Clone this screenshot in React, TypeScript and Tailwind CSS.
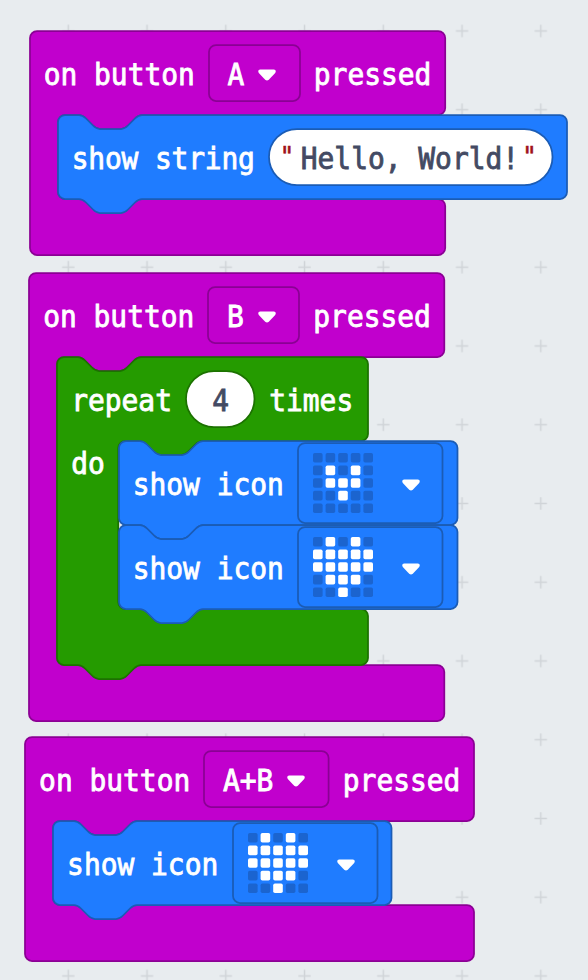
import type { ReactNode } from "react";

type Tone = "input" | "basic" | "loops";

const tones: Record<Tone, string> = {
  input: "fill-[#c100cd] stroke-[#8b0094]",
  basic: "fill-[#1f7cff] stroke-[#1b5cb5]",
  loops: "fill-[#259b00] stroke-[#1c7200]",
};

const R = 7;
const UNIT = 84;
const CORNER = `a${R},${R} 0 0 1`;
const NOTCH =
  "c3.5,0 5.25,1.75 7,3.5 l7,7 c1.75,1.75 3.5,3.5 7,3.5 h21 c3.5,0 5.25,-1.75 7,-3.5 l7,-7 c1.75,-1.75 3.5,-3.5 7,-3.5";
const NOTCH_BACK =
  "c-3.5,0 -5.25,1.75 -7,3.5 l-7,7 c-1.75,1.75 -3.5,3.5 -7,3.5 h-21 c-3.5,0 -5.25,-1.75 -7,-3.5 l-7,-7 c-1.75,-1.75 -3.5,-3.5 -7,-3.5";

interface OutlineProps {
  tone: Tone;
  width: number;
  mouth?: { inset: number; height: number };
  stackable?: boolean;
}

/** Puzzle-piece silhouette; `mouth` opens a C-shaped slot for nested blocks. */
function Outline({ tone, width, mouth, stackable = false }: OutlineProps) {
  const bottom = mouth ? UNIT + mouth.height + 56 : UNIT;
  const d = [
    `M0,${R} ${CORNER} ${R},${-R}`,
    stackable ? `H21 ${NOTCH}` : "",
    `H${width - R} ${CORNER} ${R},${R}`,
    mouth
      ? `V${UNIT - R} ${CORNER} ${-R},${R} H${mouth.inset + 84} ${NOTCH_BACK} H${mouth.inset + R}
         a${R},${R} 0 0 0 ${-R},${R} v${mouth.height - 2 * R} a${R},${R} 0 0 0 ${R},${R}
         H${width - R} ${CORNER} ${R},${R}`
      : "",
    `V${bottom - R} ${CORNER} ${-R},${R}`,
    stackable ? `H84 ${NOTCH_BACK}` : "",
    `H${R} ${CORNER} ${-R},${-R} Z`,
  ].join(" ");
  return (
    <svg className="overflow-visible" width={width} height={bottom} aria-hidden>
      <path d={d} className={tones[tone]} strokeWidth="1.75" />
    </svg>
  );
}

interface FrameProps {
  className: string;
  width: number;
  height: number;
  radius: number;
}

function Frame({ className, width, height, radius }: FrameProps) {
  return (
    <svg width={width} height={height} className="overflow-visible" aria-hidden>
      <rect width={width} height={height} rx={radius} className={className} strokeWidth="1.75" />
    </svg>
  );
}

/** Puts its children in one grid cell, so that the content lies on the outline. */
function Layers({ children, className = "" }: { children: ReactNode; className?: string }) {
  return <div className={`grid shrink-0 *:[grid-area:1/1] ${className}`}>{children}</div>;
}

function Arrow() {
  return (
    <svg width="18" height="12" viewBox="0 0 18 12" className="mt-1 shrink-0" aria-hidden>
      <path
        d="M2.2,0.4 H15.8 C17.6,0.4 18.4,2.4 17.2,3.9 L10.8,10.8 Q9,12.4 7.2,10.8 L0.8,3.9 C-0.4,2.4 0.4,0.4 2.2,0.4 Z"
        className="fill-white"
      />
    </svg>
  );
}

function Label({ children, className = "" }: { children: ReactNode; className?: string }) {
  return (
    <span className={`scale-y-[1.08] whitespace-pre pt-1 [-webkit-text-stroke:0.8px_currentColor] ${className}`}>
      {children}
    </span>
  );
}

function Quote() {
  return (
    <span className="scale-y-[1.08] pt-px text-[24px] text-[#a0101c] [-webkit-text-stroke:0.6px_currentColor]">"</span>
  );
}

function Dropdown({ value }: { value: string }) {
  return (
    <Layers className="h-14">
      <Frame
        className="fill-[#c100cd] stroke-[#8b0094]"
        width={91 + (value.length - 1) * 16.8}
        height={56}
        radius={7}
      />
      <div className="flex items-center gap-3.5 pl-[18.7px]">
        <Label>{value}</Label>
        <Arrow />
      </div>
    </Layers>
  );
}

const SMALL_HEART = [".....", ".#.#.", ".###.", "..#..", "....."];
const HEART = [".#.#.", "#####", "#####", ".###.", "..#.."];

function IconPicker({ leds }: { leds: string[] }) {
  return (
    <Layers className="h-20 w-[144.5px]">
      <Frame className="fill-[#1f7cff] stroke-[#1b5cb5]" width={144.5} height={80} radius={7} />
      <div className="flex items-center gap-[29px] pl-[15px]">
        <svg width="60" height="60" className="shrink-0" aria-hidden>
          {leds.flatMap((row, y) =>
            [...row].map((c, x) => (
              <rect
                key={`${x}-${y}`}
                x={x * 12.6}
                y={y * 12.6}
                width="9.6"
                height="9.6"
                rx="1.75"
                className={c === "#" ? "fill-white" : "fill-[#1b64cf]"}
              />
            )),
          )}
        </svg>
        <Arrow />
      </div>
    </Layers>
  );
}

function ShowIcon({ leds }: { leds: string[] }) {
  return (
    <Layers className="h-[84px] w-[338.5px]">
      <Outline tone="basic" width={338.5} stackable />
      <div className="flex items-center justify-between pl-3.5 pr-[14.5px]">
        <Label>show icon</Label>
        <IconPicker leds={leds} />
      </div>
    </Layers>
  );
}

function ShowString({ text }: { text: string }) {
  return (
    <Layers className="h-[84px] w-[509px]">
      <Outline tone="basic" width={509} stackable />
      <div className="flex items-center justify-between px-3.5">
        <Label className="tracking-[-0.15px]">show string</Label>
        <Layers className="h-14 w-[283.5px] text-[#434a63]">
          <Frame className="fill-white stroke-[#1b5cb5]" width={283.5} height={56} radius={28} />
          <div className="flex items-center justify-between pl-[10.5px] pr-4">
            <Quote />
            <Label className="pl-[3.5px]">{text}</Label>
            <Quote />
          </div>
        </Layers>
      </div>
    </Layers>
  );
}

function Repeat({ count, children }: { count: number; children: ReactNode }) {
  return (
    <Layers className="w-[311px]">
      <Outline tone="loops" width={311} mouth={{ inset: 61.25, height: 168 }} stackable />
      <div className="flex flex-col">
        <div className="flex h-[84px] items-center gap-[14.4px] pl-3.5">
          <Label>repeat</Label>
          <Layers className="h-14 w-[68.5px] text-[#434a63]">
            <Frame className="fill-white stroke-[#1c7200]" width={68.5} height={56} radius={28} />
            <div className="flex items-center justify-center">
              <Label>{count}</Label>
            </div>
          </Layers>
          <Label>times</Label>
        </div>
        <div className="flex">
          <div className="flex h-[42px] w-[61.5px] shrink-0 items-center pl-3.5">
            <Label>do</Label>
          </div>
          <div className="flex flex-col">{children}</div>
        </div>
      </div>
    </Layers>
  );
}

interface OnButtonProps {
  button: string;
  width: number;
  mouthHeight: number;
  children: ReactNode;
}

function OnButton({ button, width, mouthHeight, children }: OnButtonProps) {
  return (
    <Layers>
      <Outline tone="input" width={width} mouth={{ inset: 28, height: mouthHeight }} />
      <section className="flex flex-col">
        <header className="flex h-[84px] items-center gap-3.5 pl-3.5">
          <Label>on button</Label>
          <Dropdown value={button} />
          <Label>pressed</Label>
        </header>
        <div className="flex pl-7">{children}</div>
      </section>
    </Layers>
  );
}

function WorkspaceGrid() {
  return (
    <svg width="588" height="980" aria-hidden>
      <defs>
        <pattern id="grid" width="78.75" height="78.75" x="28.9" y="-8.4" patternUnits="userSpaceOnUse">
          <path d="M33.2,39.4 h12.4 M39.4,33.2 v12.4" className="stroke-[#d0d4d8]" strokeWidth="1.5" />
        </pattern>
      </defs>
      <rect width="100%" height="100%" fill="url(#grid)" />
    </svg>
  );
}

export default function App() {
  return (
    <main className="h-[980px] w-[588px] overflow-hidden bg-[#e8ecef] font-['DejaVu_Sans_Mono','Liberation_Mono',monospace] text-[27.9px] leading-none text-white">
      <Layers>
        <WorkspaceGrid />
        <div className="flex flex-col items-start pt-[30.8px]">
          <div className="flex pb-[18.5px] pl-[29.7px]">
            <OnButton button="A" width={415.2} mouthHeight={84}>
              <ShowString text="Hello, World!" />
            </OnButton>
          </div>
          <div className="flex pb-[15.5px] pl-[29.2px]">
            <OnButton button="B" width={415.3} mouthHeight={308}>
              <Repeat count={4}>
                <ShowIcon leds={SMALL_HEART} />
                <ShowIcon leds={HEART} />
              </Repeat>
            </OnButton>
          </div>
          <div className="flex pl-[25.1px]">
            <OnButton button="A+B" width={449} mouthHeight={84}>
              <ShowIcon leds={HEART} />
            </OnButton>
          </div>
        </div>
      </Layers>
    </main>
  );
}
